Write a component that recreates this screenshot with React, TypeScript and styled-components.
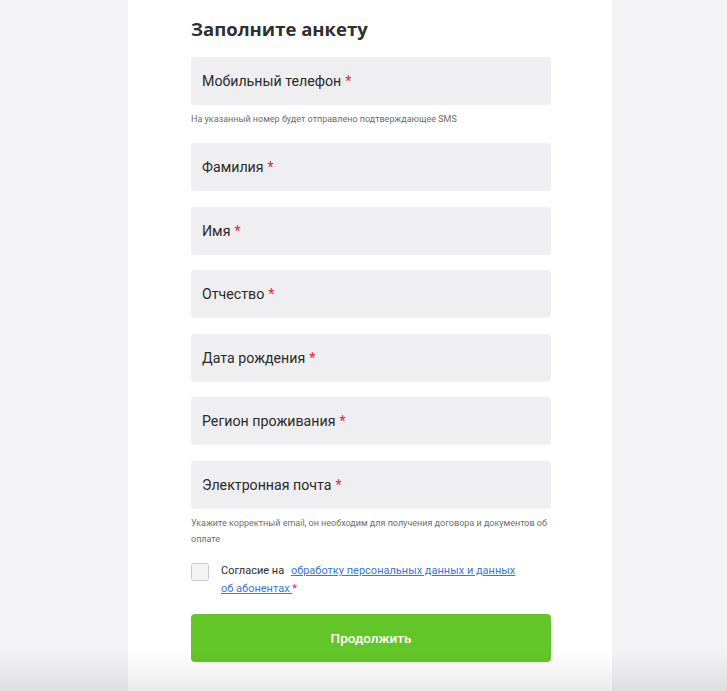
import React from "react";
import styled, { createGlobalStyle } from "styled-components";

const Global = createGlobalStyle`
  html, body { margin: 0; padding: 0; background: #f3f2f4; }
  body { font-family: Roboto, "Noto Sans", Arial, sans-serif; color: #2b2b2b; }
  * { box-sizing: border-box; }
`;

const Page = styled.div`
  min-height: 691px;
  display: flex;
  justify-content: center;
  padding-left: 13px;
`;

const Card = styled.div`
  width: 484px;
  background: #ffffff;
  padding: 16px 61px 40px 63px;
`;

const Title = styled.h1`
  margin: 0 0 15px;
  font-family: "Open Sans", Roboto, Arial, sans-serif;
  font-size: 18.5px;
  line-height: 26px;
  font-weight: 700;
  color: #2f2f2f;
`;

const Form = styled.div`
  display: flex;
  flex-direction: column;
`;

const Field = styled.div<{ $gap: number }>`
  height: 48px;
  width: 360px;
  background: #efeef0;
  border-radius: 4px;
  display: flex;
  align-items: center;
  padding-left: 11px;
  font-size: 14.2px;
  color: #2a2a2a;
  margin-bottom: ${(p) => p.$gap}px;
`;

const Star = styled.span<{ $ml?: number }>`
  color: #e8243c;
  margin-left: ${(p) => p.$ml ?? 4}px;
`;

const Hint = styled.div<{ $gap: number }>`
  font-size: 9px;
  line-height: 16px;
  color: #6e6e6e;
  margin-top: 6px;
  margin-bottom: ${(p) => p.$gap}px;
`;

const Consent = styled.label`
  display: flex;
  gap: 12px;
  align-items: flex-start;
  margin-bottom: 16px;
`;

const Box = styled.span`
  flex: none;
  width: 18px;
  height: 18px;
  border: 1px solid #c9c8cc;
  border-radius: 3px;
  background: #f3f2f4;
`;

const ConsentText = styled.div`
  font-size: 11px;
  line-height: 18px;
  margin-top: -1px;
  color: #2b2b2b;
  width: 300px;
`;

const Link = styled.a`
  color: #3b76d9;
  text-decoration: underline;
  margin-left: 4px;
`;

const Button = styled.button`
  width: 360px;
  height: 48px;
  border: none;
  border-radius: 4px;
  background: #63c628;
  color: #ffffff;
  font-family: Roboto, Arial, sans-serif;
  font-size: 13.5px;
  font-weight: 500;
`;

const BottomShade = styled.div`
  position: fixed;
  left: 0;
  right: 0;
  bottom: 0;
  height: 40px;
  pointer-events: none;
  background: linear-gradient(to bottom, rgba(0,0,0,0), rgba(0,0,0,0.08));
`;

const fields = [
  "Фамилия",
  "Имя",
  "Отчество",
  "Дата рождения",
  "Регион проживания",
];

export default function App() {
  return (
    <>
      <Global />
      <Page>
        <Card>
          <Title>Заполните анкету</Title>
          <Form>
            <Field $gap={0}>
              Мобильный телефон<Star>*</Star>
            </Field>
            <Hint $gap={16}>На указанный номер будет отправлено подтверждающее SMS</Hint>
            {fields.map((f) => (
              <Field key={f} $gap={15.6}>
                {f}
                <Star>*</Star>
              </Field>
            ))}
            <Field $gap={0}>
              Электронная почта<Star>*</Star>
            </Field>
            <Hint $gap={16}>
              Укажите корректный email, он необходим для получения договора и документов об оплате
            </Hint>
            <Consent>
              <Box />
              <ConsentText>
                Согласие на <Link href="#">обработку персональных данных и данных об абонентах </Link>
                <Star $ml={0}>*</Star>
              </ConsentText>
            </Consent>
            <Button>Продолжить</Button>
          </Form>
        </Card>
      </Page>
      <BottomShade />
    </>
  );
}
